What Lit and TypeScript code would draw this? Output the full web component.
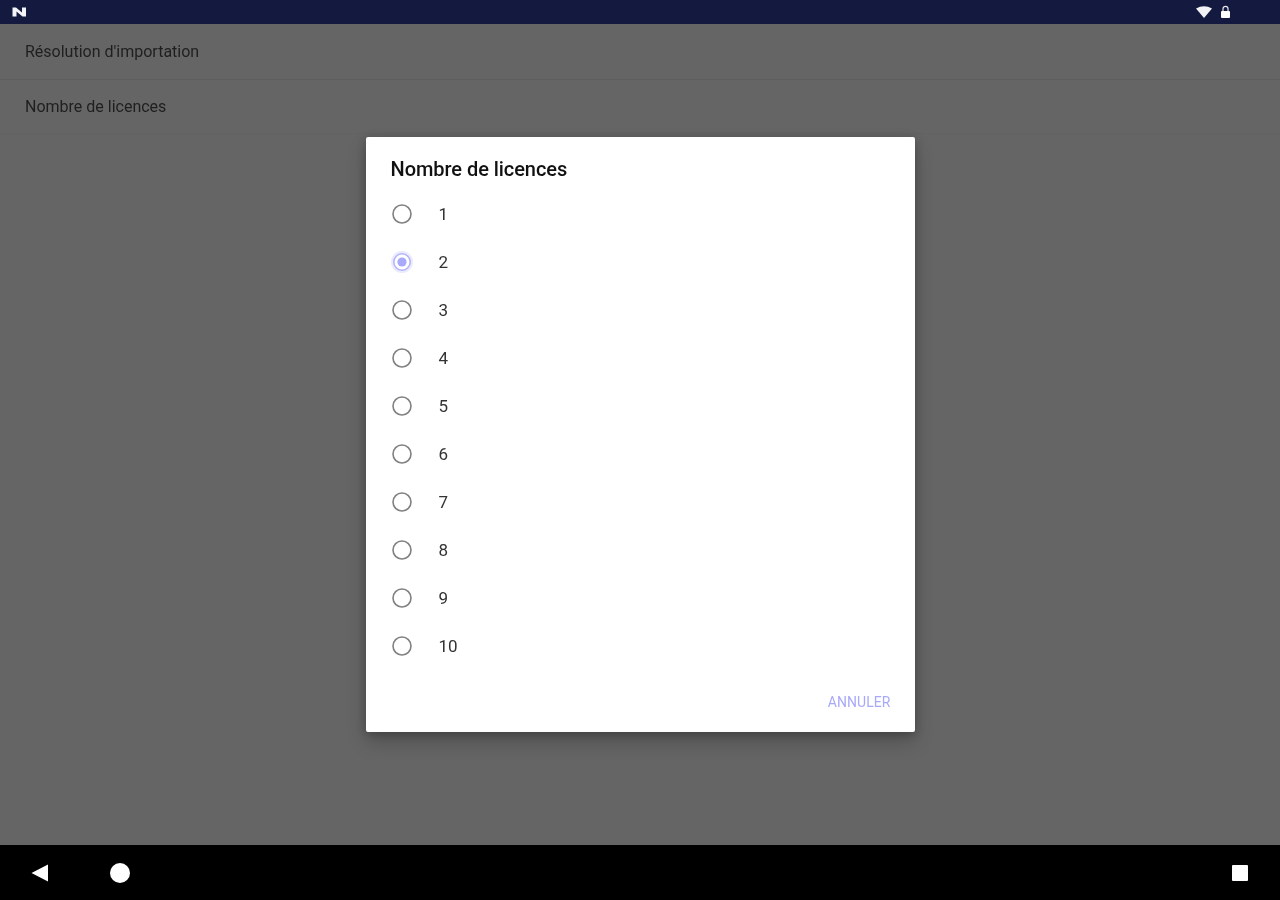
import { LitElement, html, css, svg } from "lit";
import { customElement } from "lit/decorators.js";

const OPTIONS = ["1", "2", "3", "4", "5", "6", "7", "8", "9", "10"];

@customElement("app-root")
export class AppRoot extends LitElement {
  static styles = css`
    :host {
      display: flex;
      flex-direction: column;
      width: 1280px;
      height: 900px;
      overflow: hidden;
      font-family: Roboto, "Liberation Sans", sans-serif;
      filter: blur(0.5px);
    }
    .status {
      height: 24px;
      flex: none;
      background: #14193f;
      display: flex;
      align-items: center;
      padding: 0 49px 0 12px;
      box-sizing: border-box;
    }
    .status svg { display: block; }
    .spacer { flex: 1; }
    .wifi { margin-right: 8px; }
    .main {
      flex: 1;
      position: relative;
      background: #656565;
      min-height: 0;
    }
    .row {
      height: 56px;
      box-sizing: border-box;
      padding: 0 25px;
      display: flex;
      align-items: center;
      font-size: 16px;
      color: #1f1f1f;
      border-bottom: 1px solid #5e5e5e;
    }
    .row + .row { height: 54px; border-bottom-color: #636363; }
    .overlay {
      position: absolute;
      inset: 0;
      display: flex;
      align-items: center;
      justify-content: center;
    }
    .dialog {
      width: 549px;
      height: 595px;
      background: #fff;
      border-radius: 2px;
      box-sizing: border-box;
      padding: 21px 24px 0 25px;
      display: flex;
      flex-direction: column;
      box-shadow: 0 10px 20px rgba(0,0,0,.2), 0 2px 10px rgba(0,0,0,.22);
    }
    .title {
      font-size: 20px;
      font-weight: 500;
      line-height: 22px;
      color: #111;
      height: 22px;
      margin-bottom: 10px;
      letter-spacing: -0.05px;
    }
    .option {
      height: 48px;
      display: flex;
      align-items: center;
      gap: 26px;
      font-size: 17px;
      color: #333;
      flex: none;
      padding-left: 0.5px;
    }
    .radio { flex: none; display: block; margin-right: -0.5px; }
    .actions {
      margin-top: 23px;
      display: flex;
      justify-content: flex-end;
    }
    .cancel {
      font-size: 14px;
      font-weight: 400;
      color: #a9a9fb;
      letter-spacing: 0.05px;
      line-height: 18px;
    }
    .nav {
      height: 55px;
      flex: none;
      background: #000;
      display: flex;
      align-items: center;
      padding: 0 30px;
      box-sizing: border-box;
    }
    .nav svg { display: block; }
    .home { margin-left: 60px; }
    .square { margin-right: 2px; }
  `;

  private radio(selected: boolean) {
    return html`<svg class="radio" width="22" height="22" viewBox="0 0 22 22">
      ${selected
        ? svg`<circle cx="11" cy="11" r="11" fill="#ebebff"/>
              <circle cx="11" cy="11" r="8.2" fill="#fff" stroke="#b4b4fb" stroke-width="1.6"/>
              <circle cx="11" cy="11" r="4.6" fill="#a9a9fb"/>`
        : svg`<circle cx="11" cy="11" r="9" fill="none" stroke="#808080" stroke-width="1.6"/>`}
    </svg>`;
  }

  render() {
    return html`
      <div class="status">
        <svg width="15" height="12" viewBox="0 0 15 12">
          <path d="M0.5 1.5h3.5l6 5V1.5h4v9h-3.5l-6-5v5h-4z" fill="#f4f4f8"/>
        </svg>
        <div class="spacer"></div>
        <svg class="wifi" width="16" height="12" viewBox="0 0 16 12">
          <path d="M0 2.5Q8-2 16 2.5L8 12z" fill="#fff" opacity=".95"/>
        </svg>
        <svg width="11" height="14" viewBox="0 0 11 14">
          <path d="M3 6V3.8a2.5 2.5 0 0 1 5 0V6" fill="none" stroke="#e8e8ee" stroke-width="1.2"/>
          <rect x="1" y="6" width="9" height="7" rx="1" fill="#fff"/>
        </svg>
      </div>
      <div class="main">
        <div class="row">Résolution d'importation</div>
        <div class="row">Nombre de licences</div>
        <div class="overlay">
          <div class="dialog">
            <div class="title">Nombre de licences</div>
            ${OPTIONS.map(
              (o) => html`<div class="option">${this.radio(o === "2")}<span>${o}</span></div>`
            )}
            <div class="actions"><span class="cancel">ANNULER</span></div>
          </div>
        </div>
      </div>
      <div class="nav">
        <svg width="20" height="20" viewBox="0 0 20 20">
          <path d="M1.5 10L18 1.5v17z" fill="#fff"/>
        </svg>
        <svg class="home" width="20" height="20" viewBox="0 0 20 20">
          <circle cx="10" cy="10" r="10" fill="#fff"/>
        </svg>
        <div class="spacer"></div>
        <svg class="square" width="16" height="16" viewBox="0 0 16 16">
          <rect width="16" height="16" rx="1" fill="#fff"/>
        </svg>
      </div>
    `;
  }
}
